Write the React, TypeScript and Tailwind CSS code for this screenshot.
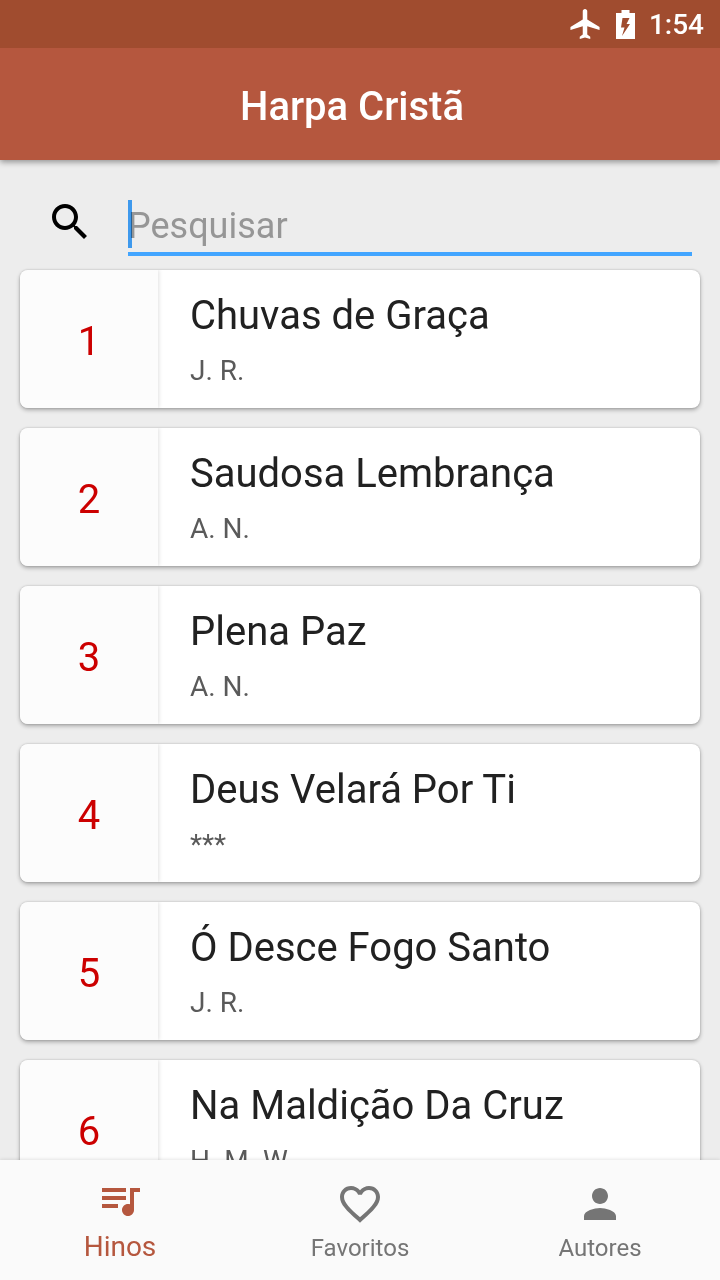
import { useState } from 'react';

interface Hymn {
  number: number;
  title: string;
  author: string;
}

const hymns: Hymn[] = [
  { number: 1, title: 'Chuvas de Graça', author: 'J. R.' },
  { number: 2, title: 'Saudosa Lembrança', author: 'A. N.' },
  { number: 3, title: 'Plena Paz', author: 'A. N.' },
  { number: 4, title: 'Deus Velará Por Ti', author: '***' },
  { number: 5, title: 'Ó Desce Fogo Santo', author: 'J. R.' },
  { number: 6, title: 'Na Maldição Da Cruz', author: 'H. M. W.' },
];

const tabs = [
  {
    id: 'hinos',
    label: 'Hinos',
    path: 'M15 6H3v2h12V6zm0 4H3v2h12v-2zM3 16h8v-2H3v2zM17 6v8.18c-.31-.11-.65-.18-1-.18-1.66 0-3 1.34-3 3s1.34 3 3 3 3-1.34 3-3V8h3V6h-5z',
  },
  {
    id: 'favoritos',
    label: 'Favoritos',
    path: 'M16.5 3c-1.74 0-3.41.81-4.5 2.09C10.91 3.81 9.24 3 7.5 3 4.42 3 2 5.42 2 8.5c0 3.78 3.4 6.86 8.55 11.54L12 21.35l1.45-1.32C18.6 15.36 22 12.28 22 8.5 22 5.42 19.58 3 16.5 3zm-4.4 15.55l-.1.1-.1-.1C7.14 14.24 4 11.39 4 8.5 4 6.5 5.5 5 7.5 5c1.54 0 3.04.99 3.57 2.36h1.87C13.46 5.99 14.96 5 16.5 5c2 0 3.5 1.5 3.5 3.5 0 2.89-3.14 5.74-7.9 10.05z',
  },
  {
    id: 'autores',
    label: 'Autores',
    path: 'M12 12c2.21 0 4-1.79 4-4s-1.79-4-4-4-4 1.79-4 4 1.79 4 4 4zm0 2c-2.67 0-8 1.34-8 4v2h16v-2c0-2.66-5.33-4-8-4z',
  },
];

function StatusBar() {
  return (
    <div className="flex h-12 items-center justify-end bg-[#a04c2f] pr-4 text-white">
      <svg viewBox="0 0 24 24" className="size-9" fill="currentColor" aria-hidden="true">
        <path d="M21.7 16v-2l-8.2-5V3.5c0-.83-.67-1.5-1.5-1.5s-1.5.67-1.5 1.5V9l-8.2 5v2l8.2-2.5V19l-2 1.5V22l3.5-1 3.5 1v-1.5l-2-1.5v-5.5l8.2 2.5z" />
      </svg>
      <svg viewBox="0 0 19 29" className="mr-[14px] ml-[13px] h-[29px] w-[19px]" fill="currentColor" aria-hidden="true">
        <path fillRule="evenodd" d="M5.5 0h8v3H19v26H0V3h5.500zM6.500 8L5 17.500h3.500L6 26l8-12h-3.500L13.500 8z" />
      </svg>
      <span className="pt-[2px] text-[28px] leading-8 font-medium">1:54</span>
    </div>
  );
}

function SearchBar() {
  const [query, setQuery] = useState('');

  return (
    <div className="flex items-start pt-[38px] pr-7 pb-[14px] pl-[46px]">
      <label htmlFor="search" aria-label="Pesquisar" className="mr-[34px] shrink-0">
        <svg viewBox="0 0 24 24" className="size-12" fill="black" aria-hidden="true">
          <path d="M15.5 14h-.79l-.28-.27C15.41 12.59 16 11.11 16 9.5 16 5.91 13.09 3 9.5 3S3 5.91 3 9.5 5.91 16 9.5 16c1.61 0 3.09-.59 4.23-1.57l.27.28v.79l5 4.99L20.49 19l-4.99-5zm-6 0C7.01 14 5 11.99 5 9.5S7.01 5 9.5 5 14 7.01 14 9.5 11.99 14 9.5 14z" />
        </svg>
      </label>
      <div className="relative min-w-0 flex-1">
        <input
          id="search"
          type="text"
          value={query}
          onChange={(e) => setQuery(e.target.value)}
          placeholder="Pesquisar"
          className="block h-[58px] w-full border-b-4 border-[#42a5ff] pt-[2px] text-4xl text-[#212121] caret-transparent outline-none placeholder:text-[#969696]"
        />
        {query === '' && <span className="absolute top-[2px] left-0 h-12 w-1 bg-[#42a5ff] mix-blend-multiply" />}
      </div>
    </div>
  );
}

function HymnCard({ hymn }: { hymn: Hymn }) {
  return (
    <li className="flex h-[138px] shrink-0 overflow-hidden rounded-lg bg-white shadow-[0_2px_4px_rgba(0,0,0,0.3),0_0_2px_rgba(0,0,0,0.2)]">
      <div className="flex w-[138px] shrink-0 items-center justify-center bg-[#fcfcfc] pt-[6px] text-[40px] leading-[48px] text-[#cc0000] shadow-[1px_0_4px_rgba(0,0,0,0.12)]">
        {hymn.number}
      </div>
      <div className="flex min-w-0 flex-1 flex-col gap-[15px] px-8 pt-[22px]">
        <h2 className="truncate text-[40px] leading-[48px] text-[#212121]">{hymn.title}</h2>
        <p className="text-[28px] leading-8 text-[#5a5a5a]">{hymn.author}</p>
      </div>
    </li>
  );
}

export default function App() {
  const [activeTab, setActiveTab] = useState('hinos');

  return (
    <div className="flex h-screen flex-col overflow-hidden bg-[#ededed] font-[Roboto,sans-serif]">
      <header className="relative shrink-0 shadow-[0_2px_6px_rgba(0,0,0,0.4)]">
        <StatusBar />
        <div className="flex h-28 items-center justify-center bg-[#b5573e] pt-[6px] pr-4">
          <h1 className="text-[40px] leading-[48px] font-medium text-white">Harpa Cristã</h1>
        </div>
      </header>

      <main className="flex min-h-0 flex-1 flex-col overflow-hidden">
        <SearchBar />
        <ul className="flex flex-col gap-5 px-5">
          {hymns.map((hymn) => (
            <HymnCard key={hymn.number} hymn={hymn} />
          ))}
        </ul>
      </main>

      <nav className="relative flex h-[120px] shrink-0 bg-[#fafafa] shadow-[0_0_4px_rgba(0,0,0,0.15)]">
        {tabs.map((tab) => (
          <button
            key={tab.id}
            type="button"
            onClick={() => setActiveTab(tab.id)}
            className={`flex flex-1 flex-col items-center justify-between ${
              activeTab === tab.id
                ? 'pt-4 pb-[17px] text-[28px] leading-8 text-[#b5573e]'
                : 'pt-5 pb-4 text-2xl leading-8 text-[#757575]'
            }`}
          >
            <svg viewBox="0 0 24 24" className="size-12" fill="currentColor" aria-hidden="true">
              <path d={tab.path} />
            </svg>
            <span>{tab.label}</span>
          </button>
        ))}
      </nav>
    </div>
  );
}
